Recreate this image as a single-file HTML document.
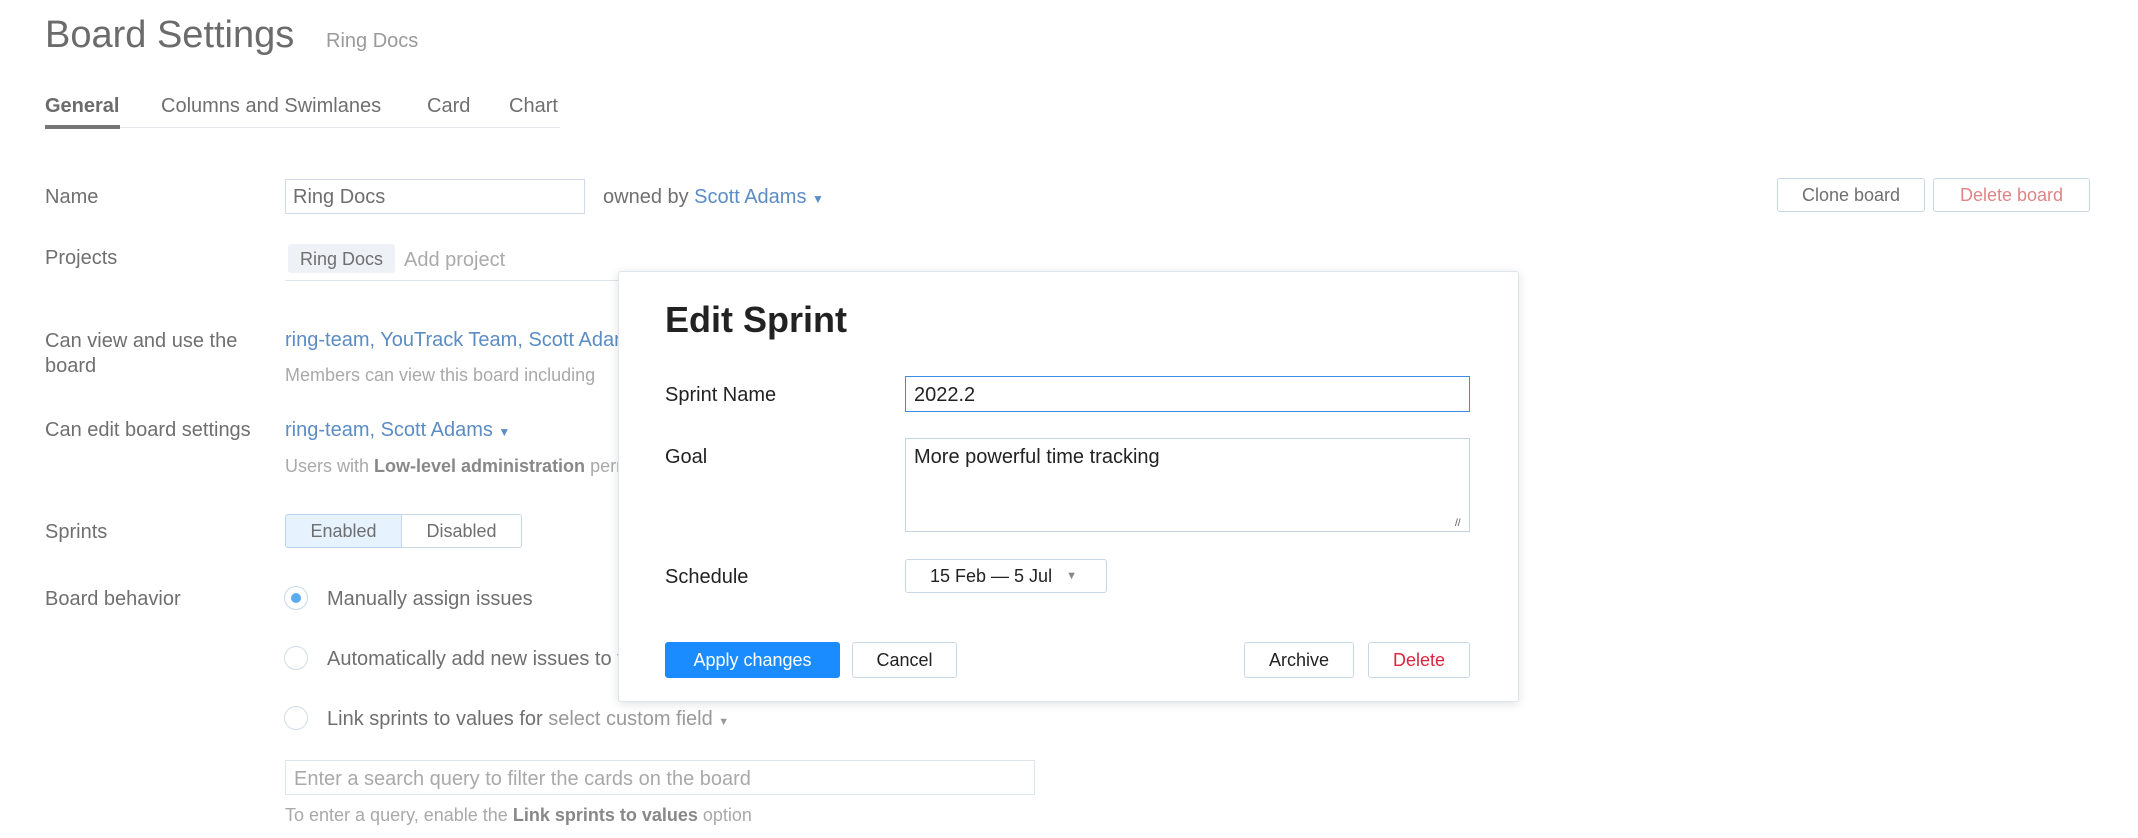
<!DOCTYPE html>
<html><head><meta charset="utf-8"><style>
*{box-sizing:border-box;margin:0;padding:0}
body{width:2138px;height:835px;overflow:hidden;background:#fff;font-family:"Liberation Sans",sans-serif;color:#6f6f6f;font-size:20px;position:relative}
#w{position:absolute;left:0;top:3px;width:2138px;height:835px}
.a{position:absolute;white-space:nowrap}
.lnk{color:#5b8cc4}
.hint{color:#a9a9a9;font-size:18px}
.btn{position:absolute;border:1px solid #c8d7e6;border-radius:3px;display:flex;align-items:center;justify-content:center;font-size:18px;background:#fff}
.m{color:#222}
</style></head><body><div id="w">
<div class="a" style="left:45px;top:11px;font-size:38px;color:#6b6b6b">Board Settings</div>
<div class="a" style="left:326px;top:27px;font-size:20px;color:#9a9a9a">Ring Docs</div>
<div class="a" style="left:45px;top:92px;font-weight:bold;color:#6b6b6b">General</div>
<div class="a" style="left:161px;top:92px">Columns and Swimlanes</div>
<div class="a" style="left:427px;top:92px">Card</div>
<div class="a" style="left:509px;top:92px">Chart</div>
<div class="a" style="left:45px;top:124px;width:515px;height:1px;background:#e4e8ee"></div>
<div class="a" style="left:45px;top:122px;width:75px;height:4px;background:#757575"></div>

<div class="a" style="left:45px;top:183px">Name</div>
<div class="a" style="left:285px;top:176px;width:300px;height:35px;border:1px solid #cfdced"></div>
<div class="a" style="left:293px;top:183px">Ring Docs</div>
<div class="a" style="left:603px;top:183px">owned by <span class="lnk">Scott Adams</span> <span class="lnk" style="font-size:12px">▼</span></div>
<div class="btn" style="left:1777px;top:175px;width:148px;height:34px;color:#6f6f6f">Clone board</div>
<div class="btn" style="left:1933px;top:175px;width:157px;height:34px;color:#e08585">Delete board</div>

<div class="a" style="left:45px;top:244px">Projects</div>
<div class="a" style="left:288px;top:241px;width:107px;height:29px;background:#eef1f5;border-radius:3px;font-size:18px;padding:5px 12px">Ring Docs</div>
<div class="a" style="left:404px;top:246px;color:#aaa">Add project</div>
<div class="a" style="left:285px;top:277px;width:340px;height:1px;background:#dce4ee"></div>

<div class="a" style="left:45px;top:326px;line-height:25px">Can view and use the<br>board</div>
<div class="a lnk" style="left:285px;top:326px">ring-team, YouTrack Team, Scott Adams</div>
<div class="a hint" style="left:285px;top:362px">Members can view this board including</div>

<div class="a" style="left:45px;top:416px">Can edit board settings</div>
<div class="a lnk" style="left:285px;top:416px">ring-team, Scott Adams <span style="font-size:12px">▼</span></div>
<div class="a hint" style="left:285px;top:453px">Users with <b style="color:#888">Low-level administration</b> permission</div>

<div class="a" style="left:45px;top:518px">Sprints</div>
<div class="a" style="left:285px;top:511px;width:117px;height:34px;background:#e6f2fd;border:1px solid #b8d4ef;border-radius:3px 0 0 3px;font-size:18px;display:flex;align-items:center;justify-content:center">Enabled</div>
<div class="a" style="left:401px;top:511px;width:121px;height:34px;border:1px solid #c8d7e6;border-radius:0 3px 3px 0;font-size:18px;display:flex;align-items:center;justify-content:center">Disabled</div>

<div class="a" style="left:45px;top:585px">Board behavior</div>
<div class="a" style="left:284px;top:583px;width:24px;height:24px;border:1px solid #c8d7e6;border-radius:50%"></div>
<div class="a" style="left:291px;top:590px;width:10px;height:10px;background:#5aabf0;border-radius:50%"></div>
<div class="a" style="left:327px;top:585px">Manually assign issues</div>
<div class="a" style="left:284px;top:643px;width:24px;height:24px;border:1px solid #d2dbe5;border-radius:50%"></div>
<div class="a" style="left:327px;top:645px">Automatically add new issues to the sprint</div>
<div class="a" style="left:284px;top:703px;width:24px;height:24px;border:1px solid #d2dbe5;border-radius:50%"></div>
<div class="a" style="left:327px;top:705px">Link sprints to values for <span style="color:#999">select custom field <span style="font-size:11px">▼</span></span></div>
<div class="a" style="left:285px;top:757px;width:750px;height:35px;border:1px solid #dce4ee"></div>
<div class="a" style="left:294px;top:765px;color:#a9a9a9">Enter a search query to filter the cards on the board</div>
<div class="a hint" style="left:285px;top:802px">To enter a query, enable the <b style="color:#888">Link sprints to values</b> option</div>

<div class="a" style="left:618px;top:268px;width:901px;height:431px;background:#fff;border:1px solid #dfe5ec;border-radius:3px;box-shadow:0 2px 10px rgba(0,0,0,.12)"></div>
<div class="a m" style="left:665px;top:296px;font-size:36px;font-weight:bold">Edit Sprint</div>
<div class="a m" style="left:665px;top:381px">Sprint Name</div>
<div class="a" style="left:905px;top:373px;width:565px;height:36px;border:1px solid #3a8ee6"></div>
<div class="a m" style="left:914px;top:381px">2022.2</div>
<div class="a m" style="left:665px;top:443px">Goal</div>
<div class="a" style="left:905px;top:435px;width:565px;height:94px;border:1px solid #c3d3e4"></div>
<div class="a m" style="left:914px;top:443px">More powerful time tracking</div>
<div class="a" style="left:1455px;top:515px;font-size:10px;color:#555">//</div>
<div class="a m" style="left:665px;top:563px">Schedule</div>
<div class="btn m" style="left:905px;top:556px;width:202px;height:34px;justify-content:flex-start;padding-left:24px">15 Feb — 5 Jul <span style="font-size:11px;color:#888;margin-left:14px">▼</span></div>
<div class="btn" style="left:665px;top:639px;width:175px;height:36px;background:#1a8cff;border-color:#1a8cff;color:#fff">Apply changes</div>
<div class="btn m" style="left:852px;top:639px;width:105px;height:36px">Cancel</div>
<div class="btn m" style="left:1244px;top:639px;width:110px;height:36px">Archive</div>
<div class="btn" style="left:1368px;top:639px;width:102px;height:36px;color:#d7263d">Delete</div>
</div></body></html>
